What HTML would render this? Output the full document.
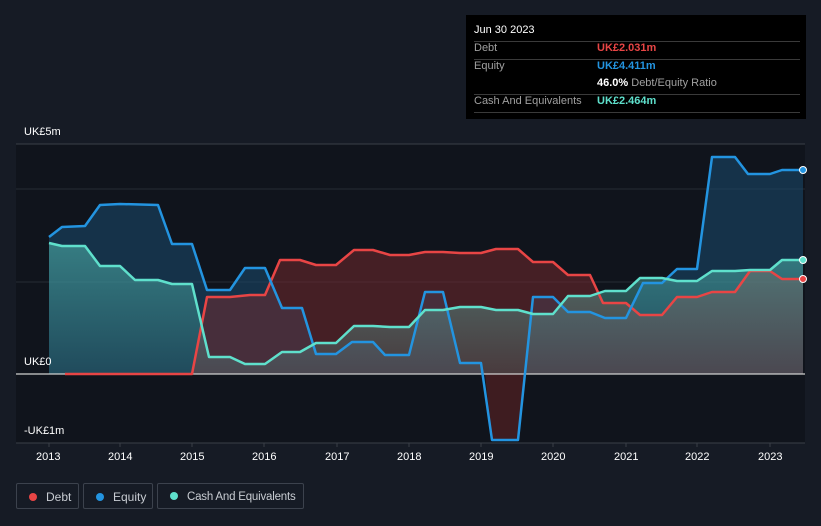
<!DOCTYPE html>
<html><head><meta charset="utf-8"><style>
html,body{margin:0;width:821px;height:526px;overflow:hidden}
body{background:#161b25;font-family:"Liberation Sans",sans-serif;position:relative}
.tt{position:absolute;left:466px;top:15px;width:340px;height:104px;background:#000;color:#fff;font-size:11px}
.tt .r{position:absolute;left:8px;width:326px;height:17px;border-bottom:1px solid #3a3a3a;white-space:nowrap}
.lab{color:#a0a0a0}
.v{position:absolute;left:123px;font-weight:bold}
.leg{position:absolute;top:483px;height:26px;border:1px solid #3c424d;border-radius:2px;color:#c8ccd2;font-size:12px;line-height:26px;box-sizing:border-box;white-space:nowrap;overflow:hidden}
.leg i{display:inline-block;width:8px;height:8px;border-radius:50%;margin:0 9px 0 12px}
.ax{position:absolute;color:#fff;font-size:11px}
</style></head><body>
<svg width="821" height="526" style="position:absolute;left:0;top:0">
<defs>
<linearGradient id="cg" x1="0" y1="0" x2="0" y2="1"><stop offset="0" stop-color="#5fd8c8" stop-opacity=".45"/><stop offset="1" stop-color="#5fd8c8" stop-opacity=".15"/></linearGradient>
</defs>
<rect x="16" y="144" width="789" height="299" fill="#10141c"/>
<line x1="16" y1="144" x2="805" y2="144" stroke="#3a3f48"/>
<line x1="16" y1="189" x2="805" y2="189" stroke="#262b34"/>
<line x1="16" y1="282" x2="805" y2="282" stroke="#262b34"/>
<line x1="16" y1="443" x2="805" y2="443" stroke="#3a3f48"/>
<g stroke="#3a3f48"><line x1="49" y1="443" x2="49" y2="447"/><line x1="120" y1="443" x2="120" y2="447"/><line x1="192" y1="443" x2="192" y2="447"/><line x1="264" y1="443" x2="264" y2="447"/><line x1="337" y1="443" x2="337" y2="447"/><line x1="409" y1="443" x2="409" y2="447"/><line x1="481" y1="443" x2="481" y2="447"/><line x1="553" y1="443" x2="553" y2="447"/><line x1="626" y1="443" x2="626" y2="447"/><line x1="697" y1="443" x2="697" y2="447"/><line x1="770" y1="443" x2="770" y2="447"/></g>
<polygon fill="#1a4a70" fill-opacity=".55" points="49,374 49,237 62,227 85,226 100,205 120,204 158,205 172,244 192,244 207,290 230,290 245,268 265,268 282,308 302,308 316,354 336,354 352,342 373,342 385,355 409,355 425,292 443,292 460,363 481,363 485,374 525,374 533,297 553,297 568,312 590,312 605,318 626,318 643,283 662,283 677,269 697,269 712,157 735,157 748,174 770,174 782,170 803,170 803,374"/>
<polygon fill="#4a1e22" fill-opacity=".8" points="485,374 492,440 518,440 525,374"/>
<polygon fill="#7a2a2e" fill-opacity=".5" points="65,374 192,374 207,297 230,297 250,295 265,295 280,260 300,260 316,265 336,265 354,250 373,250 390,255 409,255 425,252 443,252 460,253 481,253 496,249 518,249 533,262 553,262 568,275 590,275 603,303 626,303 640,315 662,315 677,297 697,297 712,292 735,292 750,271 770,271 782,279 803,279 803,374"/>
<polygon fill="url(#cg)" points="49,374 49,243 62,246 85,246 100,266 120,266 135,280 158,280 172,284 192,284 209,357 230,357 245,364 265,364 282,352 300,352 316,343 336,343 354,326 373,326 390,327 409,327 425,310 443,310 460,307 481,307 496,310 518,310 533,314 553,314 568,296 590,296 605,291 626,291 640,278 662,278 677,281 697,281 712,271 735,271 750,270 770,270 782,260 803,260 803,374"/>
<line x1="16" y1="374" x2="805" y2="374" stroke="#d0d0d0" stroke-width="1.2"/>
<g fill="none" stroke-width="2.5" stroke-linejoin="round">
<polyline stroke="#e84545" points="65,374 192,374 207,297 230,297 250,295 265,295 280,260 300,260 316,265 336,265 354,250 373,250 390,255 409,255 425,252 443,252 460,253 481,253 496,249 518,249 533,262 553,262 568,275 590,275 603,303 626,303 640,315 662,315 677,297 697,297 712,292 735,292 750,271 770,271 782,279 803,279"/>
<polyline stroke="#2394e0" points="49,237 62,227 85,226 100,205 120,204 158,205 172,244 192,244 207,290 230,290 245,268 265,268 282,308 302,308 316,354 336,354 352,342 373,342 385,355 409,355 425,292 443,292 460,363 481,363 492,440 518,440 533,297 553,297 568,312 590,312 605,318 626,318 643,283 662,283 677,269 697,269 712,157 735,157 748,174 770,174 782,170 803,170"/>
<polyline stroke="#5fe0cc" points="49,243 62,246 85,246 100,266 120,266 135,280 158,280 172,284 192,284 209,357 230,357 245,364 265,364 282,352 300,352 316,343 336,343 354,326 373,326 390,327 409,327 425,310 443,310 460,307 481,307 496,310 518,310 533,314 553,314 568,296 590,296 605,291 626,291 640,278 662,278 677,281 697,281 712,271 735,271 750,270 770,270 782,260 803,260"/>
</g>
<circle cx="803" cy="170" r="3.5" fill="#2394e0" stroke="#fff"/>
<circle cx="803" cy="260" r="3.5" fill="#5fe0cc" stroke="#fff"/>
<circle cx="803" cy="279" r="3.5" fill="#e84545" stroke="#fff"/>
</svg>
<div class="ax" style="left:24px;top:126px">UK£5m</div>
<div class="ax" style="left:24px;top:356px">UK£0</div>
<div class="ax" style="left:24px;top:425px">-UK£1m</div>
<div class="ax" style="left:36px;top:451px">2013</div><div class="ax" style="left:108px;top:451px">2014</div><div class="ax" style="left:180px;top:451px">2015</div><div class="ax" style="left:252px;top:451px">2016</div><div class="ax" style="left:325px;top:451px">2017</div><div class="ax" style="left:397px;top:451px">2018</div><div class="ax" style="left:469px;top:451px">2019</div><div class="ax" style="left:541px;top:451px">2020</div><div class="ax" style="left:614px;top:451px">2021</div><div class="ax" style="left:685px;top:451px">2022</div><div class="ax" style="left:758px;top:451px">2023</div>
<div class="tt">
<div class="r" style="top:9px">Jun 30 2023</div>
<div class="r" style="top:27px"><span class="lab">Debt</span><span class="v" style="color:#e84545">UK£2.031m</span></div>
<div class="r" style="top:45px;border:none"><span class="lab">Equity</span><span class="v" style="color:#2394e0">UK£4.411m</span></div>
<div class="r" style="top:62px"><span class="v" style="color:#fff">46.0% <span style="font-weight:normal;color:#a0a0a0">Debt/Equity Ratio</span></span></div>
<div class="r" style="top:80px"><span class="lab">Cash And Equivalents</span><span class="v" style="color:#5fe0cc">UK£2.464m</span></div>
</div>
<div class="leg" style="left:16px;width:63px"><i style="background:#e84545"></i>Debt</div>
<div class="leg" style="left:83px;width:70px"><i style="background:#2394e0"></i>Equity</div>
<div class="leg" style="left:157px;width:147px;font-size:11.5px;letter-spacing:-0.2px"><i style="background:#5fe0cc"></i>Cash And Equivalents</div>
</body></html>
